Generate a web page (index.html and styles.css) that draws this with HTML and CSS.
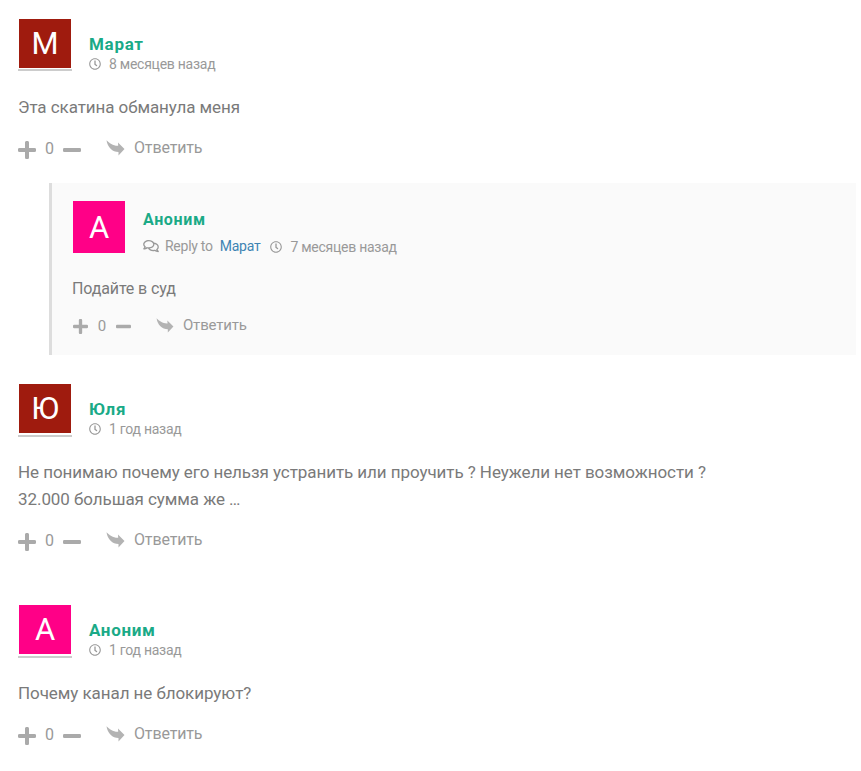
FILE: index.html
```
<!DOCTYPE html>
<html lang="ru">
<head>
<meta charset="utf-8">
<title>Комментарии</title>
<link rel="stylesheet" href="styles.css">
</head>
<body>
<svg class="defs" aria-hidden="true">
  <symbol id="clock" viewBox="0 0 512 512"><path d="M256 8C119 8 8 119 8 256s111 248 248 248 248-111 248-248S393 8 256 8zm0 448c-110.500 0-200-89.500-200-200S145.500 56 256 56s200 89.500 200 200-89.500 200-200 200zm61.800-104.400l-84.900-61.700c-3.100-2.300-4.900-5.900-4.900-9.700V116c0-6.600 5.400-12 12-12h32c6.600 0 12 5.400 12 12v141.700l66.800 48.600c5.400 3.900 6.500 11.400 2.600 16.800L334.600 349c-3.900 5.300-11.400 6.500-16.800 2.600z"/></symbol>
  <symbol id="talk" viewBox="0 0 576 512"><path d="M532 386.200c27.500-27.100 44-61.100 44-98.200 0-80-76.500-146.100-176.200-157.900C368.300 72.500 294.300 32 208 32 93.100 32 0 103.600 0 192c0 37 16.500 71 44 98.200-15.300 30.700-37.300 54.500-37.700 54.900-6.300 6.700-8.100 16.500-4.400 25 3.600 8.500 12 14 21.200 14 53.500 0 96.700-20.200 125.200-38.800 9.200 2.100 18.700 3.700 28.400 4.900C208.100 407.600 281.800 448 368 448c20.800 0 40.800-2.400 59.800-6.800C456.300 459.700 499.400 480 553 480c9.200 0 17.500-5.500 21.200-14 3.600-8.500 1.900-18.300-4.400-25-.4-.3-22.500-24.100-37.800-54.800zm-392.800-92.300L122.100 305c-14.100 9.100-28.500 16.300-43.100 21.400 2.700-4.700 5.400-9.700 8-14.800l15.500-31.100L77.700 256C64.200 242.600 48 220.700 48 192c0-60.700 73.300-112 160-112s160 51.300 160 112-73.300 112-160 112c-16.500 0-33-1.900-49-5.600l-19.800-4.500zM498.300 352l-24.700 24.400 15.500 31.100c2.600 5.100 5.300 10.100 8 14.800-14.600-5.100-29-12.300-43.100-21.400l-17.100-11.100-19.900 4.600c-16 3.700-32.500 5.600-49 5.600-54 0-102.200-20.100-131.300-49.700C338 339.500 416 272.900 416 192c0-3.400-.4-6.700-.7-10C479.700 196.500 528 238.800 528 288c0 28.700-16.200 50.600-29.700 64z"/></symbol>
  <symbol id="plus" viewBox="0 0 18 18"><path d="M7 1.500Q7 0 8.200 0h1.600Q11 0 11 1.500V7h5.500Q18 7 18 8.200v1.600Q18 11 16.500 11H11v5.500q0 1.500-1.200 1.500H8.200Q7 18 7 16.500V11H1.500Q0 11 0 9.800V8.200Q0 7 1.500 7H7z"/></symbol>
  <symbol id="minus" viewBox="0 0 18 18"><rect y="7" width="18" height="4" rx="1.200"/></symbol>
  <symbol id="reply" viewBox="0 0 18 16"><path d="M0 .3C3 3.300 6.500 6 11.700 5.800L11.500 2.600 18 9 12 15.500V12.100C6 12 1 7.500 0 .3z"/></symbol>
</svg>
<main class="thread">
  <article class="comment">
    <header class="head">
      <div class="avatar"><span class="pic red">М</span></div>
      <div class="who">
        <div class="name">Марат</div>
        <div class="meta"><svg class="clock"><use href="#clock"/></svg><span class="date">8 месяцев назад</span></div>
      </div>
    </header>
    <p class="text">Эта скатина обманула меня</p>
    <footer class="actions"><svg class="vote"><use href="#plus"/></svg><span class="count">0</span><svg class="vote"><use href="#minus"/></svg><svg class="arrow"><use href="#reply"/></svg><span class="answer">Ответить</span></footer>
  </article>

  <article class="comment nested">
    <header class="head">
      <div class="avatar"><span class="pic pink">А</span></div>
      <div class="who">
        <div class="name">Аноним</div>
        <div class="meta"><svg class="talk"><use href="#talk"/></svg><span class="to">Reply to</span><span class="link">Марат</span><svg class="clock"><use href="#clock"/></svg><span class="date">7 месяцев назад</span></div>
      </div>
    </header>
    <p class="text">Подайте в суд</p>
    <footer class="actions"><svg class="vote"><use href="#plus"/></svg><span class="count">0</span><svg class="vote"><use href="#minus"/></svg><svg class="arrow"><use href="#reply"/></svg><span class="answer">Ответить</span></footer>
  </article>

  <article class="comment">
    <header class="head">
      <div class="avatar tall"><span class="pic red">Ю</span></div>
      <div class="who">
        <div class="name">Юля</div>
        <div class="meta"><svg class="clock"><use href="#clock"/></svg><span class="date">1 год назад</span></div>
      </div>
    </header>
    <p class="text">Не понимаю почему его нельзя устранить или проучить ? Неужели нет возможности ?<br>32.000 большая сумма же …</p>
    <footer class="actions"><svg class="vote"><use href="#plus"/></svg><span class="count">0</span><svg class="vote"><use href="#minus"/></svg><svg class="arrow"><use href="#reply"/></svg><span class="answer">Ответить</span></footer>
  </article>

  <article class="comment">
    <header class="head">
      <div class="avatar tall"><span class="pic pink">А</span></div>
      <div class="who">
        <div class="name">Аноним</div>
        <div class="meta"><svg class="clock"><use href="#clock"/></svg><span class="date">1 год назад</span></div>
      </div>
    </header>
    <p class="text">Почему канал не блокируют?</p>
    <footer class="actions"><svg class="vote"><use href="#plus"/></svg><span class="count">0</span><svg class="vote"><use href="#minus"/></svg><svg class="arrow"><use href="#reply"/></svg><span class="answer">Ответить</span></footer>
  </article>
</main>
</body>
</html>
```
FILE: styles.css
```
* { box-sizing: border-box; }
body { margin: 0; background: #fff; font-family: Roboto, sans-serif; color: #7a7a7a; }
svg { fill: currentColor; flex: none; display: block; }
.defs { display: none; }
.thread { padding: 19px 5px 0 18px; }

.comment { margin-bottom: 54px; }
.comment:first-child { margin-bottom: 24px; }
.comment:last-child { margin-bottom: 0; }
.head { display: flex; gap: 17px; height: 75px; }
.avatar { width: 54px; height: 52px; padding: 0 1px; border-bottom: 2px solid #ccc; }
.avatar.tall { height: 53px; }
.pic { display: flex; align-items: center; justify-content: center; height: 49px; color: #fff; font-size: 31px; line-height: 49px; }
.red { background: #9f1b0e; }
.pink { background: #ff0087; }
.who { padding-top: 15px; }
.name { font-size: 17px; line-height: 20px; font-weight: 700; letter-spacing: .7px; color: #1aaa87; }
.meta { display: flex; align-items: center; height: 20px; font-size: 14px; line-height: 20px; letter-spacing: -.26px; color: #999; white-space: nowrap; }
.clock { width: 12px; height: 12px; margin-right: 8px; }
.text { margin: 0; font-size: 17px; line-height: 27px; letter-spacing: -.07px; }
.actions { display: flex; align-items: center; height: 22px; margin-top: 16px; color: #aaa; }
.vote { width: 18px; height: 18px; margin-top: 3px; }
.count { width: 27px; padding-top: 2px; text-align: center; font-size: 16px; line-height: 20px; color: #999; }
.arrow { width: 19px; height: 16px; margin: 0 9px 0 25px; color: #b3b3b3; }
.answer { font-size: 16px; line-height: 20px; letter-spacing: -.15px; color: #999; }

.nested { margin: 0 0 29px 31px; padding: 18px 0 0 20px; height: 172px; border-left: 3px solid #ddd; background: #fafafa; }
.nested .head { height: 74px; }
.nested .avatar { border: 0; }
.nested .pic { height: 52px; padding-top: 1px; line-height: 52px; }
.nested .who { padding-top: 9px; }
.nested .name { font-size: 16px; letter-spacing: .65px; }
.nested .meta { margin-top: 6px; }
.nested .date { padding-top: 1px; }
.nested .talk { width: 16px; height: 14px; margin-right: 6px; }
.nested .link { color: #3e84b3; margin: 0 10px 0 7px; }
.nested .clock { margin-top: 1px; }
.nested .text { font-size: 16px; letter-spacing: -.13px; }
.nested .actions { margin-top: 12px; }
.nested .vote { width: 15px; height: 15px; margin-top: 3px; }
.nested .vote:first-child { margin-left: 1px; }
.nested .count { width: 28px; font-size: 15px; }
.nested .arrow { width: 18px; height: 15px; margin-right: 9px; }
.nested .answer { font-size: 15px; letter-spacing: -.2px; }
```
